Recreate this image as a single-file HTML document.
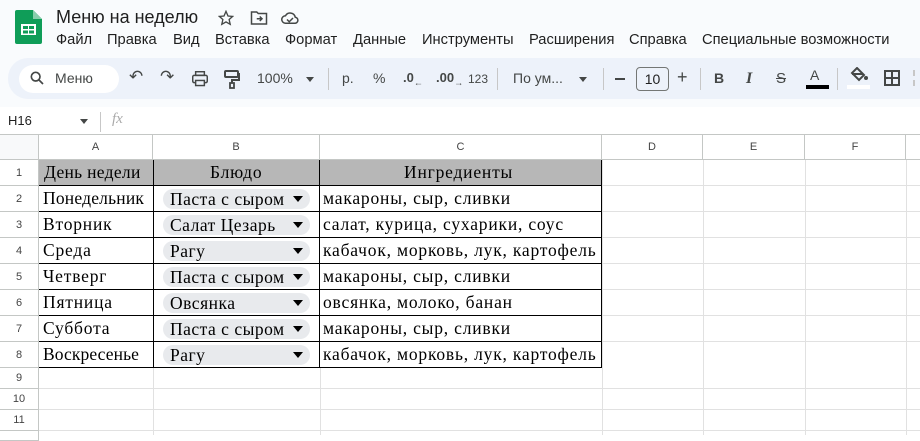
<!DOCTYPE html>
<html><head><meta charset="utf-8"><style>
*{margin:0;padding:0;box-sizing:border-box}
body{width:920px;height:435px;overflow:hidden;background:#fff;font-family:"Liberation Sans",sans-serif;position:relative}
.a{position:absolute;white-space:nowrap}
.top{position:absolute;left:0;top:0;width:920px;height:107px;background:#f9fbfd}
.menu span{position:absolute;top:32px;font-size:14.7px;color:#1f1f1f}
.tb{position:absolute;left:8px;top:58px;width:930px;height:41px;background:#edf2fa;border-radius:20px}
.t{position:absolute;top:70px;font-size:14px;color:#444746}
.sep{position:absolute;top:68px;width:1px;height:22px;background:#c7c7c7}
.ch{position:absolute;top:135px;height:25px;border-right:1px solid #c4c7c5;border-bottom:1px solid #c4c7c5;background:#fff;font-size:11px;color:#444;text-align:center;line-height:24px}
.rh{position:absolute;left:0;width:39px;border-bottom:1px solid #c4c7c5;border-right:1px solid #c4c7c5;font-size:11px;color:#444;text-align:center}
.gl{position:absolute;background:#e1e1e1}
.c{position:absolute;font-family:"Liberation Serif",serif;font-size:17.5px;letter-spacing:0.8px;color:#000;white-space:nowrap}
.chip{position:absolute;left:163px;width:147px;height:20px;background:#e8eaed;border-radius:10px}
.chip span{position:absolute;left:7px;top:0px;font-family:"Liberation Serif",serif;font-size:17.5px;letter-spacing:0.5px;line-height:20px}
.chip i{position:absolute;right:7px;top:7px;width:0;height:0;border-left:5px solid transparent;border-right:5px solid transparent;border-top:6px solid #000}
</style></head><body>
<div class="top"></div>
<svg class="a" style="left:15px;top:10px" width="27" height="34" viewBox="0 0 27 34"><path d="M2 0h16l9 9v23a2 2 0 0 1-2 2H2a2 2 0 0 1-2-2V2a2 2 0 0 1 2-2z" fill="#0f9d58"/><path d="M18 0v9h9z" fill="#87ceac"/><rect x="6" y="14" width="15" height="11" fill="#fff"/><rect x="8" y="16" width="5" height="3" fill="#0f9d58"/><rect x="14" y="16" width="5" height="3" fill="#0f9d58"/><rect x="8" y="20.5" width="5" height="3" fill="#0f9d58"/><rect x="14" y="20.5" width="5" height="3" fill="#0f9d58"/></svg>
<div class="a" style="left:56px;top:7px;font-size:18px;color:#1f1f1f">Меню на неделю</div>
<svg class="a" style="left:218px;top:10px" width="16" height="16" viewBox="0 0 24 24"><path d="M12 2l3 7 7 .6-5.3 4.7 1.6 7.2L12 17.8 5.7 21.5l1.6-7.2L2 9.6 9 9z" fill="none" stroke="#444746" stroke-width="2"/></svg>
<svg class="a" style="left:250px;top:10px" width="18" height="16" viewBox="0 0 24 20"><path d="M2 2h7l2 2h11v14H2z" fill="none" stroke="#444746" stroke-width="2"/><path d="M9 11h7M13 8l3 3-3 3" fill="none" stroke="#444746" stroke-width="2"/></svg>
<svg class="a" style="left:281px;top:10px" width="18" height="16" viewBox="0 0 24 18"><path d="M6 16a5 5 0 0 1 0-10 7 7 0 0 1 13 2 4 4 0 0 1-1 8z" fill="none" stroke="#444746" stroke-width="2"/><path d="M8 11l3 3 5-5" fill="none" stroke="#444746" stroke-width="2"/></svg>
<div class="menu"><span style="left:56px">Файл</span><span style="left:107px">Правка</span><span style="left:173px">Вид</span><span style="left:215px">Вставка</span><span style="left:285px">Формат</span><span style="left:353px">Данные</span><span style="left:422px">Инструменты</span><span style="left:529px">Расширения</span><span style="left:629px">Справка</span><span style="left:702px">Специальные возможности</span></div>
<div class="tb"></div>
<div class="a" style="left:19px;top:65px;width:100px;height:28px;background:#fff;border-radius:14px"></div>
<svg class="a" style="left:29px;top:70px" width="16" height="16" viewBox="0 0 24 24"><circle cx="10" cy="10" r="6.5" fill="none" stroke="#444746" stroke-width="2.5"/><path d="M15 15l6 6" stroke="#444746" stroke-width="2.5"/></svg>
<div class="t" style="left:55px">Меню</div>
<div class="t" style="left:129px;font-size:17px;top:67px">↶</div>
<div class="t" style="left:160px;font-size:17px;top:67px">↷</div>
<svg class="a" style="left:191px;top:71px" width="18" height="16" viewBox="0 0 24 22"><rect x="6" y="1" width="12" height="5" fill="none" stroke="#444746" stroke-width="2"/><rect x="2" y="6" width="20" height="10" rx="2" fill="none" stroke="#444746" stroke-width="2"/><rect x="6" y="13" width="12" height="7" fill="#edf2fa" stroke="#444746" stroke-width="2"/></svg>
<svg class="a" style="left:224px;top:70px" width="16" height="19" viewBox="0 0 16 19"><rect x="1" y="1" width="13" height="6" rx="1" fill="none" stroke="#444746" stroke-width="2"/><path d="M14 4h1v6H8v3" fill="none" stroke="#444746" stroke-width="2"/><rect x="6" y="13" width="4" height="5" fill="none" stroke="#444746" stroke-width="1.8"/></svg>
<div class="t" style="left:257px">100%</div>
<div class="a" style="left:306px;top:77px;border-left:4px solid transparent;border-right:4px solid transparent;border-top:5px solid #444746"></div>
<div class="sep" style="left:328px"></div>
<div class="t" style="left:342px">р.</div>
<div class="t" style="left:373px">%</div>
<div class="t" style="left:403px;font-size:13px;font-weight:bold">.0<sub style="font-size:9px">←</sub></div>
<div class="t" style="left:436px;font-size:13px;font-weight:bold">.00<sub style="font-size:9px">→</sub></div>
<div class="t" style="left:468px;font-size:12px;top:72px">123</div>
<div class="sep" style="left:497px"></div>
<div class="t" style="left:513px">По ум...</div>
<div class="a" style="left:579px;top:77px;border-left:4px solid transparent;border-right:4px solid transparent;border-top:5px solid #444746"></div>
<div class="sep" style="left:603px"></div>
<div class="a" style="left:615px;top:78px;width:10px;height:2px;background:#444746"></div>
<div class="a" style="left:636px;top:67px;width:33px;height:24px;border:1px solid #747775;border-radius:4px;font-size:14px;color:#1f1f1f;text-align:center;line-height:22px">10</div>
<div class="t" style="left:677px;font-size:18px;top:67px">+</div>
<div class="sep" style="left:700px"></div>
<div class="t" style="left:714px;font-weight:bold">B</div>
<div class="t" style="left:746px;font-style:italic;font-family:'Liberation Serif';font-size:16px;font-weight:bold">I</div>
<div class="t" style="left:776px;font-size:15px;text-decoration:line-through">S</div>
<div class="t" style="left:810px;font-size:14px;top:67px">A</div>
<div class="a" style="left:806px;top:85px;width:23px;height:4px;background:#000"></div>
<div class="sep" style="left:837px"></div>
<svg class="a" style="left:849px;top:67px" width="20" height="15" viewBox="0 0 20 15"><path d="M8 1l7 7-5 5-7-7z" fill="none" stroke="#444746" stroke-width="2"/><path d="M3 7h11" stroke="#444746" stroke-width="2"/><circle cx="17" cy="11" r="2" fill="#444746"/></svg>
<div class="a" style="left:847px;top:85px;width:23px;height:4px;background:#fff"></div>
<svg class="a" style="left:884px;top:70px" width="16" height="16" viewBox="0 0 16 16"><path d="M1 1h14v14H1zM8 1v14M1 8h14" fill="none" stroke="#444746" stroke-width="2"/></svg>
<div class="a" style="left:913px;top:70px;width:7px;height:16px;border-left:2px dashed #c7c7c7"></div>
<div class="a" style="left:8px;top:113px;font-size:13px;color:#1f1f1f">H16</div>
<div class="a" style="left:80px;top:119px;border-left:4px solid transparent;border-right:4px solid transparent;border-top:5px solid #444746"></div>
<div class="a" style="left:100px;top:112px;width:1px;height:20px;background:#c7c7c7"></div>
<div class="a" style="left:112px;top:111px;font-family:'Liberation Serif';font-style:italic;font-size:15px;color:#aaa">fx</div>
<div class="a" style="left:0;top:134px;width:920px;height:1px;background:#c4c7c5"></div>
<div class="ch" style="left:0;width:39px;background:#f8f9fa"></div>
<div class="ch" style="left:39px;width:114px">A</div>
<div class="ch" style="left:153px;width:167px">B</div>
<div class="ch" style="left:320px;width:282px">C</div>
<div class="ch" style="left:602px;width:101px">D</div>
<div class="ch" style="left:703px;width:102px">E</div>
<div class="ch" style="left:805px;width:101px">F</div>
<div class="ch" style="left:906px;width:20px"></div>
<div class="rh" style="top:160px;height:26px;line-height:26px">1</div>
<div class="rh" style="top:186px;height:26px;line-height:26px">2</div>
<div class="rh" style="top:212px;height:26px;line-height:26px">3</div>
<div class="rh" style="top:238px;height:26px;line-height:26px">4</div>
<div class="rh" style="top:264px;height:26px;line-height:26px">5</div>
<div class="rh" style="top:290px;height:26px;line-height:26px">6</div>
<div class="rh" style="top:316px;height:26px;line-height:26px">7</div>
<div class="rh" style="top:342px;height:26px;line-height:26px">8</div>
<div class="rh" style="top:368px;height:21px;line-height:20px">9</div>
<div class="rh" style="top:389px;height:21px;line-height:20px">10</div>
<div class="rh" style="top:410px;height:21px;line-height:20px">11</div>
<div class="rh" style="top:431px;height:10px"></div>
<div class="gl" style="left:602px;top:160px;width:1px;height:275px"></div>
<div class="gl" style="left:703px;top:160px;width:1px;height:275px"></div>
<div class="gl" style="left:805px;top:160px;width:1px;height:275px"></div>
<div class="gl" style="left:906px;top:160px;width:1px;height:275px"></div>
<div class="gl" style="left:153px;top:368px;width:1px;height:67px"></div>
<div class="gl" style="left:320px;top:368px;width:1px;height:67px"></div>
<div class="gl" style="left:39px;top:185px;width:881px;height:1px"></div>
<div class="gl" style="left:39px;top:211px;width:881px;height:1px"></div>
<div class="gl" style="left:39px;top:237px;width:881px;height:1px"></div>
<div class="gl" style="left:39px;top:263px;width:881px;height:1px"></div>
<div class="gl" style="left:39px;top:289px;width:881px;height:1px"></div>
<div class="gl" style="left:39px;top:315px;width:881px;height:1px"></div>
<div class="gl" style="left:39px;top:341px;width:881px;height:1px"></div>
<div class="gl" style="left:39px;top:388px;width:881px;height:1px"></div>
<div class="gl" style="left:39px;top:409px;width:881px;height:1px"></div>
<div class="gl" style="left:39px;top:430px;width:881px;height:1px"></div>
<div class="a" style="left:39px;top:160px;width:563px;height:25px;background:#b7b7b7"></div>
<div class="a" style="left:39px;top:160px;width:563px;height:208px;border:1px solid #000;border-top:none;border-left:none"></div>
<div class="a" style="left:153px;top:160px;width:1px;height:208px;background:#000"></div>
<div class="a" style="left:319px;top:160px;width:1px;height:208px;background:#000"></div>
<div class="a" style="left:39px;top:185px;width:563px;height:1px;background:#000"></div>
<div class="a" style="left:39px;top:211px;width:563px;height:1px;background:#000"></div>
<div class="a" style="left:39px;top:237px;width:563px;height:1px;background:#000"></div>
<div class="a" style="left:39px;top:263px;width:563px;height:1px;background:#000"></div>
<div class="a" style="left:39px;top:289px;width:563px;height:1px;background:#000"></div>
<div class="a" style="left:39px;top:315px;width:563px;height:1px;background:#000"></div>
<div class="a" style="left:39px;top:341px;width:563px;height:1px;background:#000"></div>
<div class="a" style="left:39px;top:367px;width:563px;height:1px;background:#000"></div>
<div class="c" style="left:44px;top:162px;letter-spacing:0.3px">День недели</div>
<div class="c" style="left:210px;top:162px">Блюдо</div>
<div class="c" style="left:404px;top:162px">Ингредиенты</div>
<div class="c" style="left:43px;top:188px;letter-spacing:0.2px">Понедельник</div>
<div class="c" style="left:43px;top:214px">Вторник</div>
<div class="c" style="left:43px;top:240px">Среда</div>
<div class="c" style="left:43px;top:266px">Четверг</div>
<div class="c" style="left:43px;top:292px">Пятница</div>
<div class="c" style="left:43px;top:318px">Суббота</div>
<div class="c" style="left:43px;top:344px;letter-spacing:0.1px">Воскресенье</div>
<div class="chip" style="top:189px"><span>Паста с сыром</span><i></i></div>
<div class="chip" style="top:215px"><span>Салат Цезарь</span><i></i></div>
<div class="chip" style="top:241px"><span>Рагу</span><i></i></div>
<div class="chip" style="top:267px"><span>Паста с сыром</span><i></i></div>
<div class="chip" style="top:293px"><span>Овсянка</span><i></i></div>
<div class="chip" style="top:319px"><span>Паста с сыром</span><i></i></div>
<div class="chip" style="top:345px"><span>Рагу</span><i></i></div>
<div class="c" style="left:323px;top:188px">макароны, сыр, сливки</div>
<div class="c" style="left:323px;top:214px">салат, курица, сухарики, соус</div>
<div class="c" style="left:323px;top:240px">кабачок, морковь, лук, картофель</div>
<div class="c" style="left:323px;top:266px">макароны, сыр, сливки</div>
<div class="c" style="left:323px;top:292px">овсянка, молоко, банан</div>
<div class="c" style="left:323px;top:318px">макароны, сыр, сливки</div>
<div class="c" style="left:323px;top:344px">кабачок, морковь, лук, картофель</div>
</body></html>
